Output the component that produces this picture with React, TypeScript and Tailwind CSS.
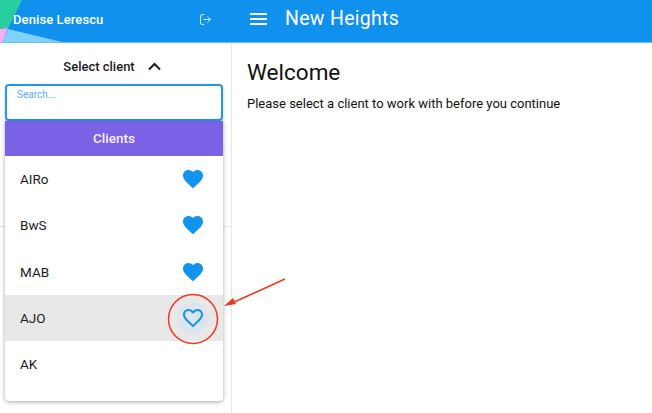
import { LogOut } from "lucide-react";

const FILLED = "M12 21.35l-1.45-1.32C5.4 15.36 2 12.28 2 8.5 2 5.42 4.42 3 7.5 3c1.74 0 3.41.81 4.5 2.09C13.09 3.81 14.76 3 16.5 3 19.58 3 22 5.42 22 8.5c0 3.78-3.4 6.86-8.55 11.54L12 21.35z";
const OUTLINE = "M16.5 3c-1.74 0-3.41.81-4.5 2.09C10.91 3.81 9.24 3 7.5 3 4.42 3 2 5.42 2 8.5c0 3.78 3.4 6.86 8.55 11.54L12 21.35l1.45-1.32C18.6 15.36 22 12.28 22 8.5 22 5.42 19.58 3 16.5 3zm-4.4 15.55l-.1.1-.1-.1C7.14 14.24 4 11.39 4 8.5 4 6.5 5.5 5 7.5 5c1.54 0 3.04.99 3.57 2.36h1.87C13.46 5.99 14.96 5 16.5 5c2 0 3.5 1.5 3.5 3.5 0 2.89-3.14 5.74-7.9 10.05z";

function Heart({ d }: { d: string }) {
  return (
    <svg width="24" height="24" viewBox="0 0 24 24" fill="#1194f0">
      <path d={d} />
    </svg>
  );
}

function Row({ name, active, noHeart }: { name: string; active?: boolean; noHeart?: boolean }) {
  return (
    <div className={`flex h-[46.3px] items-center justify-between pl-[15px] pr-[14px] ${active ? "bg-[#e8e8e8]" : ""}`}>
      <span className="text-[13.5px] text-[#1c1c1c]">{name}</span>
      {!noHeart && (
        <div className="relative flex h-[32px] w-[32px] items-center justify-center rounded-full">
          {active && <div className="absolute inset-0 rounded-full bg-[#dce5ee]" />}
          <div className="relative flex">
            <Heart d={active ? OUTLINE : FILLED} />
          </div>
        </div>
      )}
    </div>
  );
}

export default function App() {
  return (
    <div className="relative flex h-[413px] w-[652px] flex-col overflow-hidden bg-white font-['Roboto',sans-serif]">
      <header className="flex h-[43px] shrink-0 items-center border-b border-[#74bdf5] bg-[#1191ee] pb-[4px] text-white">
        <div className="flex h-full w-[231px] shrink-0 items-center justify-between pl-[13px] pr-[19px]">
          <span className="relative z-10 text-[13px] font-medium leading-none tracking-[0.1px]">Denise Lerescu</span>
          <LogOut size={13} strokeWidth={1.6} className="relative z-10" />
        </div>
        <div className="flex items-center pl-[19px]">
          <svg width="17" height="12" viewBox="0 0 17 12" fill="#fff">
            <rect x="0" y="0" width="17" height="2" />
            <rect x="0" y="5" width="17" height="2" />
            <rect x="0" y="10" width="17" height="2" />
          </svg>
          <span className="pl-[18px] text-[19.5px] leading-none tracking-[0.3px]">New Heights</span>
        </div>
      </header>

      <svg className="absolute left-0 top-0" width="64" height="42" viewBox="0 0 64 42">
        <polygon points="0,0 22,0 8,28 0,29" fill="#27cf9f" />
        <polygon points="0,29 8,28 3,42 0,42" fill="#f5aef5" />
        <polygon points="8,29 62,42 3,42" fill="#7ed3fb" />
      </svg>

      <div className="flex flex-1">
        <aside className="relative w-[232px] shrink-0 border-r border-[#e8e8e8]">
          <div className="mt-[183px] h-px w-full bg-[#e2e2e2]" />
          <div className="absolute left-[5px] top-0 w-[218px]">
            <div className="flex h-[41px] items-center justify-center gap-[13px] pr-[4px] pt-[6px] text-[13px] font-medium text-[#1c1c1c]">
              <span>Select client</span>
              <svg width="13" height="9" viewBox="0 0 13 9" fill="none" stroke="#1c1c1c" strokeWidth="2">
                <path d="M1 7.5l5.5-5.5 5.5 5.5" />
              </svg>
            </div>
            <div className="h-[37px] rounded-[4px] border-2 border-[#2196f3] bg-white px-[10px] pt-[2px] text-[10px] leading-[14px] text-[#5aaef5] shadow-[0_1px_3px_rgba(0,0,0,0.2)]">
              Search...
            </div>
            <div className="rounded-b-[4px] bg-white shadow-[0_1px_4px_rgba(0,0,0,0.35)]">
              <div className="flex h-[35px] items-center justify-center bg-[#7b61e3] text-[13.5px] font-medium text-[#f3f0ff]">
                Clients
              </div>
              <div className="pb-[14px]">
                <Row name="AIRo" />
                <Row name="BwS" />
                <Row name="MAB" />
                <Row name="AJO" active />
                <Row name="AK" noHeart />
              </div>
            </div>
          </div>
        </aside>

        <main className="pl-[15px] pt-[13px] text-[#111]">
          <h1 className="text-[22.5px] leading-[32px]">Welcome</h1>
          <p className="mt-[6px] text-[13px] leading-[20px]">Please select a client to work with before you continue</p>
        </main>
      </div>

      <svg className="absolute left-0 top-0" width="652" height="413" viewBox="0 0 652 413" fill="none">
        <circle cx="193" cy="319" r="24.5" stroke="#f0381c" strokeWidth="1.5" />
        <path d="M285 279L232 303" stroke="#f0381c" strokeWidth="1.6" />
        <polygon points="224,306 233,298 236,304" fill="#f0381c" />
      </svg>
    </div>
  );
}
